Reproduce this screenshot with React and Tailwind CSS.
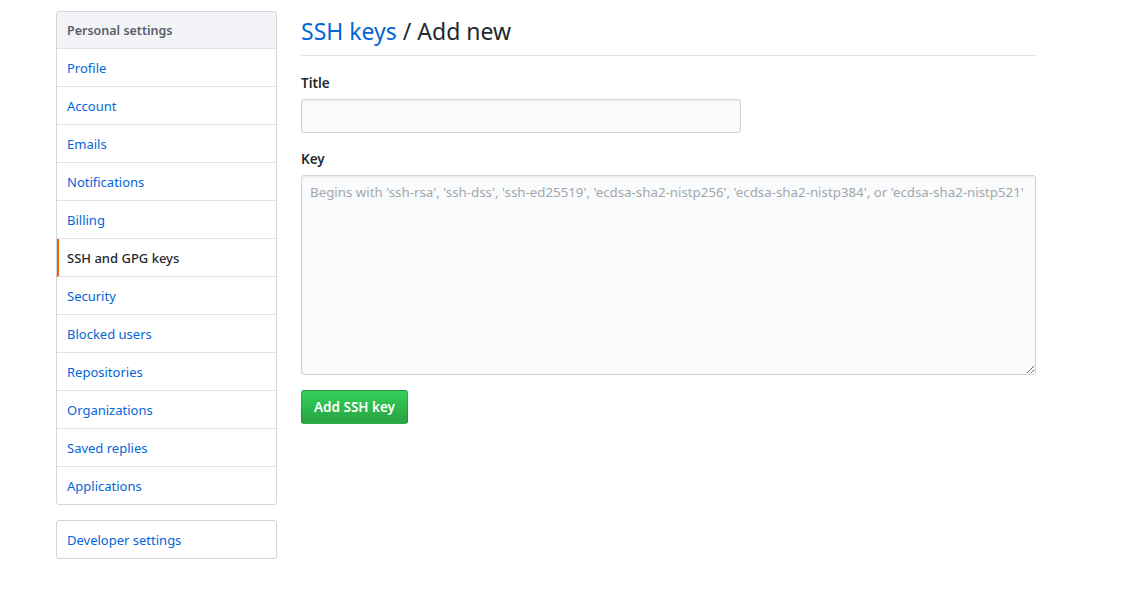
import React from "react";

const items = [
  "Profile",
  "Account",
  "Emails",
  "Notifications",
  "Billing",
  "SSH and GPG keys",
  "Security",
  "Blocked users",
  "Repositories",
  "Organizations",
  "Saved replies",
  "Applications",
];

export default function App() {
  return (
    <div
      className="w-[1140px] h-[598px] bg-white text-[#24292e]"
      style={{ fontFamily: '"Noto Sans", "Open Sans", sans-serif' }}
    >
      <div className="flex pl-[56px] pt-[11px]">
        <div className="w-[221px] shrink-0">
          <nav className="border border-[#d1d5da] rounded-[3px] overflow-hidden text-[13px]">
            <div className="h-[37px] px-[10px] pt-[2px] flex items-center bg-[#f3f4f8] border-b border-[#e1e4e8] font-semibold text-[#586069] text-[12.5px]">
              Personal settings
            </div>
            {items.map((it, i) => {
              const last = i === items.length - 1;
              const sel = it === "SSH and GPG keys";
              return (
                <div
                  key={it}
                  className={
                    "flex items-center pt-[2px] " +
                    (last ? "h-[37px] " : "h-[38px] border-b border-[#e1e4e8] ") +
                    (sel
                      ? "border-l-2 border-l-[#e36209] pl-[8px] text-[#24292e] font-medium"
                      : "pl-[10px] text-[#0366d6]")
                  }
                >
                  {it}
                </div>
              );
            })}
          </nav>
          <div className="mt-[15px] border border-[#d1d5da] rounded-[3px] h-[39px] pt-[2px] px-[10px] flex items-center text-[13px] text-[#0366d6]">
            Developer settings
          </div>
        </div>
        <main className="ml-[24px] w-[735px]">
          <h1 className="text-[23px] font-normal leading-[30px] pb-[9px] border-b border-[#e1e4e8] pt-[5px]">
            <span className="text-[#0366d6]">SSH keys</span> / Add new
          </h1>
          <label className="block mt-[18px] text-[13.5px] font-semibold leading-[18px]">Title</label>
          <div className="mt-[7px] w-[440px] h-[34px] bg-[#fafbfc] border border-[#d1d5da] rounded-[3px] shadow-[inset_0_1px_2px_rgba(27,31,35,0.075)]"></div>
          <label className="block mt-[17px] text-[13.5px] font-semibold leading-[18px]">Key</label>
          <textarea
            className="mt-[7px] block w-[735px] h-[200px] bg-[#fafbfc] border border-[#d1d5da] rounded-[3px] px-[8px] py-[6px] text-[13.3px] leading-[20px] placeholder:text-[#a3a7ab] outline-none resize-y shadow-[inset_0_1px_2px_rgba(27,31,35,0.075)]"
            style={{ fontFamily: '"Noto Sans", sans-serif' }}
            placeholder="Begins with 'ssh-rsa', 'ssh-dss', 'ssh-ed25519', 'ecdsa-sha2-nistp256', 'ecdsa-sha2-nistp384', or 'ecdsa-sha2-nistp521'"
          />
          <button className="mt-[15px] h-[34px] w-[107px] rounded-[3px] border border-[rgba(27,31,35,0.2)] bg-[linear-gradient(-180deg,#34d058_0%,#28a745_90%)] text-white text-[13.5px] font-semibold">
            Add SSH key
          </button>
        </main>
      </div>
    </div>
  );
}
